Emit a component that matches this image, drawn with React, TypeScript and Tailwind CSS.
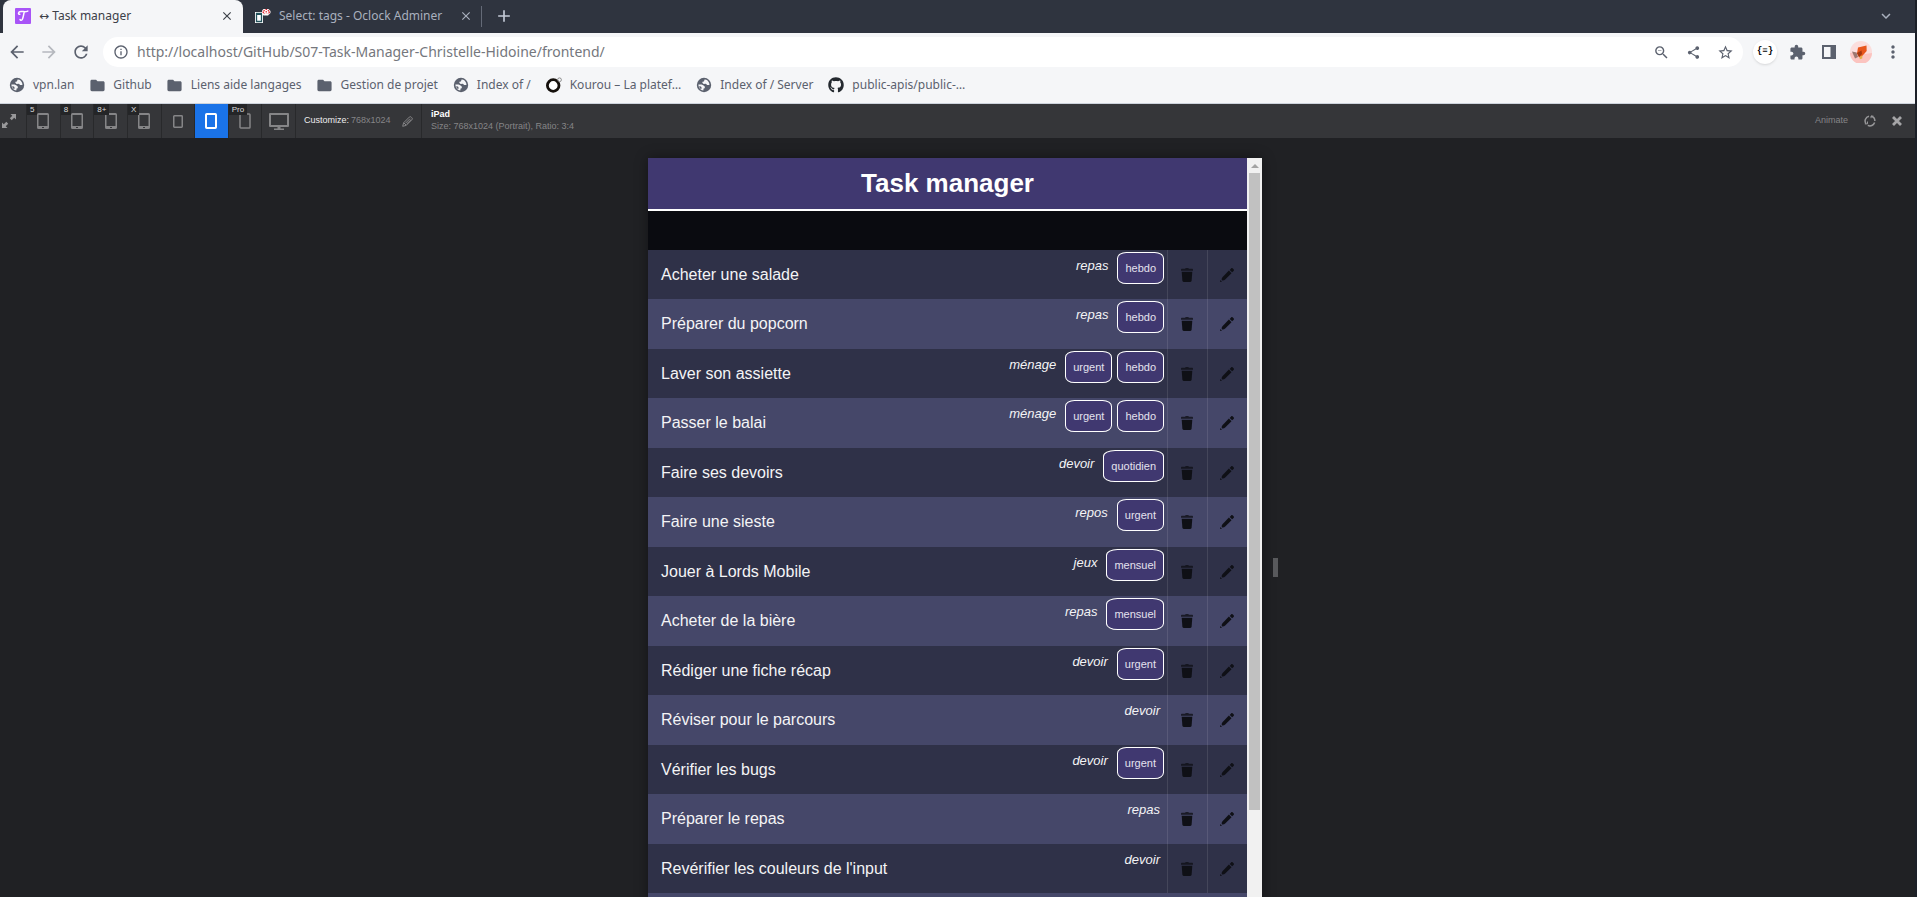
import type { ReactNode } from "react";
import {
  MdAdd,
  MdArrowBack,
  MdArrowForward,
  MdClose,
  MdExpandMore,
  MdExtension,
  MdFolder,
  MdInfoOutline,
  MdMoreVert,
  MdRefresh,
  MdShare,
  MdStarBorder,
  MdZoomOut,
} from "react-icons/md";
import { FaGithub } from "react-icons/fa";

type Task = { name: string; category: string; tags: string[] };

const TASKS: Task[] = [
  { name: "Acheter une salade", category: "repas", tags: ["hebdo"] },
  { name: "Préparer du popcorn", category: "repas", tags: ["hebdo"] },
  { name: "Laver son assiette", category: "ménage", tags: ["urgent", "hebdo"] },
  { name: "Passer le balai", category: "ménage", tags: ["urgent", "hebdo"] },
  { name: "Faire ses devoirs", category: "devoir", tags: ["quotidien"] },
  { name: "Faire une sieste", category: "repos", tags: ["urgent"] },
  { name: "Jouer à Lords Mobile", category: "jeux", tags: ["mensuel"] },
  { name: "Acheter de la bière", category: "repas", tags: ["mensuel"] },
  { name: "Rédiger une fiche récap", category: "devoir", tags: ["urgent"] },
  { name: "Réviser pour le parcours", category: "devoir", tags: [] },
  { name: "Vérifier les bugs", category: "devoir", tags: ["urgent"] },
  { name: "Préparer le repas", category: "repas", tags: [] },
  { name: "Revérifier les couleurs de l'input", category: "devoir", tags: [] },
];

/* ---------- Icons ---------- */

function TaskFavicon() {
  return (
    <svg viewBox="0 0 16 16" className="size-4 shrink-0">
      <rect width="16" height="16" rx="1" fill="#a854f7" />
      <path
        d="M4.800 6.300C3 6.500 2.800 3.600 6 3.500c2.600-.1 4 .7 6.800-.4M9.300 3.900C8.500 6.500 8.400 9 7.400 11.200c-.6 1.300-2 1.400-2.300.3"
        fill="none"
        stroke="#fff"
        strokeWidth="1.500"
        strokeLinecap="round"
      />
    </svg>
  );
}

function AdminerFavicon() {
  return (
    <svg viewBox="0 0 16 16" className="size-4 shrink-0">
      <path d="M0 4h8v11H0z" fill="#fff" />
      <path d="M1.500 5.500h5v8h-5z" fill="#fff" stroke="#24535c" strokeWidth="1.300" />
      <path d="M1 6.500h6" stroke="#24535c" strokeWidth="1" />
      <path d="M8.500 1h5L15.500 3v2L13 7.500H8.500L7 6V2.500z" fill="#fff" />
      <path
        d="M9.500 2 8 4l1.500 2M13 2l1.500 2L13 6M10.500 1.500h2M11.200 3v2.500"
        stroke="#e0202a"
        strokeWidth="1.200"
        fill="none"
        strokeDasharray="1.600 .6"
      />
    </svg>
  );
}

function Globe() {
  return (
    <svg viewBox="0 0 16 16" className="size-4">
      <circle cx="8" cy="8" r="7.200" fill="#5b616e" />
      <path
        d="M8.600 2.600c2-.2 3.300 1.200 4.300 2.900.4.900.6 1.700.5 2.600l-2.300-.2-1.200-1.200-2.300.3-1.300-1.200.2-1.100 1.400-.2z"
        fill="#f5f6f8"
      />
      <path
        d="m2.400 7.400 3.200.1 2 .9 1.300 1.300-.2 1.500-1.100.3-.3 2C4.800 13 2.600 11.200 2.400 7.400z"
        fill="#f5f6f8"
      />
      <path d="m3 9.200 2 .4.700 1.500-.6 1.200C4 11.500 3.300 10.500 3 9.200z" fill="#5b616e" />
    </svg>
  );
}

function Folder() {
  return <MdFolder className="size-[17px] shrink-0" />;
}

function KourouIcon() {
  return (
    <svg viewBox="0 0 16 16" className="size-4">
      <circle cx="7.200" cy="8.500" r="5.800" fill="#fff" stroke="#15100c" strokeWidth="2.800" />
      <circle cx="13.500" cy="2.800" r="1.900" fill="none" stroke="#777" strokeWidth=".8" />
    </svg>
  );
}

function SidePanelIcon() {
  return (
    <svg viewBox="0 0 14 14" className="size-3.5">
      <path d="M0 0h14v14H0zM2 2v10h6.500V2z" fill="#5b616e" fillRule="evenodd" />
    </svg>
  );
}

function Avatar() {
  return (
    <svg viewBox="0 0 22 22" className="size-[22px]">
      <circle cx="11" cy="11" r="11" fill="#fbdedd" />
      <path d="M0 12l7-1 8 2 7-1a11 11 0 0 1-22 0z" fill="#fbc4c0" />
      <path d="m2 10.500 4.500 1L8 16l-3 1.500z" fill="#9c7770" />
      <path d="M8 6.500 16.500 4.500l.2 5.500-4 4.500-3.500 2L7 12.500z" fill="#e8561c" />
      <path d="m7 12 4.500-2.500L12 13l-3 3z" fill="#a33810" />
      <path d="m9.500 16 3-1.800-.3 3.300-2.400.8z" fill="#e5b04a" />
    </svg>
  );
}

function ExpandIcon() {
  return (
    <svg viewBox="0 0 14 14" className="size-3.5" fill="#98989a">
      <path d="M8.500 0H14v5.500L12.200 3.700 9.700 6.200 7.800 4.300l2.500-2.500zM5.500 14H0V8.500l1.800 1.800 2.500-2.500 1.900 1.900-2.500 2.500z" />
    </svg>
  );
}

function PhoneIcon() {
  return (
    <svg viewBox="0 0 12 16" className="h-4 w-3">
      <path
        d="M1.500 0h9A1.500 1.500 0 0 1 12 1.500v13a1.500 1.500 0 0 1-1.500 1.500h-9A1.500 1.500 0 0 1 0 14.500v-13A1.500 1.500 0 0 1 1.500 0zM1.500 2v11h9V2z"
        fill="#858587"
        fillRule="evenodd"
      />
      <path d="M5 14h2v1H5z" fill="#353639" />
    </svg>
  );
}

function SmallTabletIcon() {
  return (
    <svg viewBox="0 0 10 13" className="h-[13px] w-2.5">
      <rect x=".75" y=".75" width="8.500" height="11.500" rx=".7" fill="none" stroke="#858587" strokeWidth="1.500" />
    </svg>
  );
}

function TabletIcon({ active = false }: { active?: boolean }) {
  return (
    <svg viewBox="0 0 12 16" className="h-4 w-3">
      <rect
        x="1"
        y="1"
        width="10"
        height="14"
        rx=".8"
        fill="none"
        stroke={active ? "#fff" : "#858587"}
        strokeWidth={active ? 2 : 1.5}
      />
    </svg>
  );
}

function DesktopIcon() {
  return (
    <svg viewBox="0 0 20 17" className="h-[17px] w-5" fill="#858587">
      <path d="M1 0h18a1 1 0 0 1 1 1v12a1 1 0 0 1-1 1H1a1 1 0 0 1-1-1V1a1 1 0 0 1 1-1zm1 2v10h16V2z" fillRule="evenodd" />
      <path d="M8.500 14h3v1.500H15V17H5v-1.500h3.500z" />
    </svg>
  );
}

function OutlinePencil() {
  return (
    <svg viewBox="0 0 11 11" className="size-[11px]" fill="none" stroke="#858587" strokeWidth="1">
      <path d="M.7 10.300 1.600 6.800 7.300 1.100a1.300 1.300 0 0 1 1.900 0l.7.700a1.300 1.300 0 0 1 0 1.900L4.200 9.400zM1.800 6.800l2.400 2.400M3.500 7.200 8 2.700M4.700 8 9.300 3.500" />
    </svg>
  );
}

function RotateIcon() {
  return (
    <svg viewBox="0 0 12 12" className="size-3" fill="none" stroke="#98989a" strokeWidth="1.500">
      <path d="M5 1.200A4.900 4.900 0 0 0 2 8.800M3.800 10.400a4.900 4.900 0 0 0 6.800-2.900M10.900 6A4.900 4.900 0 0 0 7 1.200" />
      <path d="M.8 8.900h2.700V6.500M7 3.200V1.100h2.400" strokeWidth="1" />
    </svg>
  );
}

function BoldCross() {
  return (
    <svg viewBox="0 0 10 10" className="size-2.5" stroke="#a5a5a7" strokeWidth="2.800">
      <path d="m1 1 8 8M9 1 1 9" />
    </svg>
  );
}

function TrashIcon() {
  return (
    <svg viewBox="0 0 12 14" className="h-3.5 w-3" fill="currentColor">
      <path d="M0 1.600C0 1 .5.800 1 .800h3L4.800 0h2.400L8 .800h3c.5 0 1 .2 1 .8v1.100H0z" opacity=".8" />
      <path d="M.7 3.700h10.600l-.7 9.100c-.1.700-.6 1.200-1.300 1.200H2.700c-.7 0-1.200-.5-1.300-1.200z" />
    </svg>
  );
}

function PencilIcon() {
  return (
    <svg viewBox="0 0 14 14" className="size-3.5" fill="currentColor">
      <path d="m9.700 1.900 1.400-1.500c.5-.5 1.100-.5 1.600 0l.9.900c.5.500.5 1.100 0 1.600l-1.500 1.400z" />
      <path d="m8.900 2.600 2.600 2.600-6.300 6.300c-1 .9-2.200 1.300-3.300.8-.5-1.100-.1-2.300.8-3.300z" />
      <path d="M.3 12 2 13.700.1 14z" />
    </svg>
  );
}

/* ---------- Browser chrome ---------- */

function TabStrip() {
  return (
    <div className="flex h-[33px] items-stretch bg-[#2f343f] pl-[3px] text-[12px]">
      <div className="flex w-60 items-center rounded-t-lg bg-[#f5f6f8] pr-[9px] pb-px pl-3 text-[#3c4048]">
        <TaskFavicon />
        <span className="ml-2 flex-1 truncate">
          <span className="font-['DejaVu_Sans',sans-serif]">↔</span> Task manager
        </span>
        <button type="button" aria-label="Close tab">
          <MdClose className="size-3.5" />
        </button>
      </div>
      <div className="flex w-[238px] items-center pr-2 pb-px pl-3 text-[#a9b0be]">
        <AdminerFavicon />
        <span className="ml-2 flex-1 truncate">Select: tags - Oclock Adminer</span>
        <button type="button" aria-label="Close tab">
          <MdClose className="size-3.5" />
        </button>
      </div>
      <div className="my-1.5 w-px bg-[#646a77]" />
      <button type="button" aria-label="New tab" className="ml-3 pb-px text-[#c3c9d6]">
        <MdAdd className="size-5" />
      </button>
      <button type="button" aria-label="Search tabs" className="mr-5 ml-auto pb-px text-[#a9b0be]">
        <MdExpandMore className="size-[18px]" />
      </button>
    </div>
  );
}

function ToolButton({ label, children }: { label: string; children: ReactNode }) {
  return (
    <button type="button" aria-label={label} className="flex h-[30px] w-8 shrink-0 items-center justify-center">
      {children}
    </button>
  );
}

function AddressRow() {
  return (
    <div className="flex items-center bg-[#f5f6f8] pt-1 pr-1.5 pl-px text-[#5b616e]">
      <ToolButton label="Back">
        <MdArrowBack className="size-5" />
      </ToolButton>
      <div className="text-[#b5b8be]">
        <ToolButton label="Forward">
          <MdArrowForward className="size-5" />
        </ToolButton>
      </div>
      <ToolButton label="Reload">
        <MdRefresh className="size-5" />
      </ToolButton>
      <div className="mx-1.5 flex h-[30px] flex-1 items-center rounded-full bg-white pr-0.5 pl-2.5">
        <MdInfoOutline className="size-4" />
        <input
          aria-label="Address"
          defaultValue="http://localhost/GitHub/S07-Task-Manager-Christelle-Hidoine/frontend/"
          className="ml-2 flex-1 bg-transparent pb-px text-[14px] text-[#75777d] outline-none"
        />
        <ToolButton label="Zoom">
          <MdZoomOut className="size-[17px]" />
        </ToolButton>
        <ToolButton label="Share">
          <MdShare className="size-[15px]" />
        </ToolButton>
        <ToolButton label="Bookmark this page">
          <MdStarBorder className="size-[17px]" />
        </ToolButton>
      </div>
      <ToolButton label="JSON viewer">
        <span className="flex size-6 items-center justify-center rounded-full bg-white font-['Liberation_Mono',monospace] text-[9px] font-bold text-black shadow">
          {"{≡}"}
        </span>
      </ToolButton>
      <ToolButton label="Extensions">
        <MdExtension className="size-[17px]" />
      </ToolButton>
      <ToolButton label="Side panel">
        <SidePanelIcon />
      </ToolButton>
      <ToolButton label="Profile">
        <Avatar />
      </ToolButton>
      <ToolButton label="Menu">
        <MdMoreVert className="size-5" />
      </ToolButton>
    </div>
  );
}

function Bookmark({ icon, children }: { icon: ReactNode; children: ReactNode }) {
  return (
    <a href="#" className="flex items-center gap-2 whitespace-nowrap">
      <span className="flex w-4 justify-center">{icon}</span>
      {children}
    </a>
  );
}

function BookmarkBar() {
  return (
    <nav className="flex h-[37px] items-center gap-[15px] border-b border-[#cdd3dc] bg-[#f5f6f8] pl-[9px] text-[12px] text-[#5b616e]">
      <Bookmark icon={<Globe />}>vpn.lan</Bookmark>
      <Bookmark icon={<Folder />}>Github</Bookmark>
      <Bookmark icon={<Folder />}>Liens aide langages</Bookmark>
      <Bookmark icon={<Folder />}>Gestion de projet</Bookmark>
      <Bookmark icon={<Globe />}>Index of /</Bookmark>
      <Bookmark icon={<KourouIcon />}>Kourou – La platef…</Bookmark>
      <Bookmark icon={<Globe />}>Index of / Server</Bookmark>
      <Bookmark icon={<FaGithub className="size-4 text-[#24292f]" />}>public-apis/public-…</Bookmark>
    </nav>
  );
}

/* ---------- Device toolbar ---------- */

function DeviceButton({
  label,
  badge,
  active = false,
  children,
}: {
  label: string;
  badge?: string;
  active?: boolean;
  children: ReactNode;
}) {
  return (
    <button
      type="button"
      aria-label={label}
      aria-pressed={active}
      className={`relative flex items-center justify-center border-l border-[#28292b] ${active ? "bg-[#1a73e8]" : ""}`}
    >
      {children}
      {badge && (
        <span className="absolute top-0 left-0 bg-[#242527] px-[3px] text-[8px] leading-[11px] text-[#dcdcdc]">
          {badge}
        </span>
      )}
    </button>
  );
}

function DeviceToolbar() {
  return (
    <div className="flex h-[34px] items-stretch bg-[#353639] font-['Liberation_Sans',sans-serif] text-[9px] text-[#858587]">
      <button type="button" aria-label="Fit to window" className="flex w-[26px] items-center pl-0.5">
        <ExpandIcon />
      </button>
      <div className="grid w-[269px] grid-cols-8">
        <DeviceButton label="iPhone 5" badge="5">
          <PhoneIcon />
        </DeviceButton>
        <DeviceButton label="iPhone 8" badge="8">
          <PhoneIcon />
        </DeviceButton>
        <DeviceButton label="iPhone 8 Plus" badge="8+">
          <PhoneIcon />
        </DeviceButton>
        <DeviceButton label="iPhone X" badge="X">
          <PhoneIcon />
        </DeviceButton>
        <DeviceButton label="iPad Mini">
          <SmallTabletIcon />
        </DeviceButton>
        <DeviceButton label="iPad" active>
          <TabletIcon active />
        </DeviceButton>
        <DeviceButton label="iPad Pro" badge="Pro">
          <TabletIcon />
        </DeviceButton>
        <DeviceButton label="Desktop">
          <DesktopIcon />
        </DeviceButton>
      </div>
      <button type="button" className="flex w-[127px] items-center border-x border-[#28292b] px-2">
        <span className="text-[#eeeeee]">Customize:</span>
        <span className="ml-0.5 flex-1 text-left">768x1024</span>
        <OutlinePencil />
      </button>
      <div className="flex flex-col justify-center gap-px pb-0.5 pl-[9px] leading-[11px]">
        <strong className="text-white">iPad</strong>
        <span>Size: 768x1024 (Portrait), Ratio: 3:4</span>
      </div>
      <div className="ml-auto flex items-center gap-4 pr-[13px]">
        <button type="button">Animate</button>
        <button type="button" aria-label="Rotate">
          <RotateIcon />
        </button>
        <button type="button" aria-label="Close">
          <BoldCross />
        </button>
      </div>
    </div>
  );
}

/* ---------- Task manager page ---------- */

function TaskRow({ task }: { task: Task }) {
  return (
    <li className="flex odd:h-[49px] odd:bg-[#2f3148] even:h-[50px] even:bg-[#454769]">
      <p className="flex flex-1 items-center pl-[13px] text-base">{task.name}</p>
      <div className="flex items-start pt-0.5 pr-[3px]">
        <em className="mt-1 mr-1 text-[13px] leading-5">{task.category}</em>
        {task.tags.map((tag) => (
          <span
            key={tag}
            className="ml-[5px] flex h-8 items-center rounded-[20%] border border-white bg-[#403870] px-[7px] text-[11px] text-[#e4e2ee]"
          >
            {tag}
          </span>
        ))}
      </div>
      <button
        type="button"
        aria-label={`Supprimer ${task.name}`}
        className="flex w-10 items-center justify-center border-l border-white/10 pr-0.5 text-[#0f1016]"
      >
        <TrashIcon />
      </button>
      <button
        type="button"
        aria-label={`Modifier ${task.name}`}
        className="flex w-10 items-center justify-center border-l border-white/10 pr-0.5 text-[#0f1016]"
      >
        <PencilIcon />
      </button>
    </li>
  );
}

function TaskManagerPage() {
  return (
    <div className="flex-1 bg-[#454769] font-['Liberation_Sans',sans-serif] text-[#f4f4f6]">
      <header className="flex h-[53px] items-center justify-center border-b-2 border-white bg-[#403870]">
        <h1 className="text-[26px] font-bold text-white">Task manager</h1>
      </header>
      <div className="h-[39px] bg-[#0a0b10]" />
      <ul>
        {TASKS.map((task) => (
          <TaskRow key={task.name} task={task} />
        ))}
      </ul>
    </div>
  );
}

function Scrollbar() {
  return (
    <div className="flex w-[15px] flex-col items-center bg-[#f1f1f1]">
      <div className="flex h-[15px] items-center">
        <svg viewBox="0 0 8 4" className="h-1 w-2" fill="#a3a3a3">
          <path d="M4 0 8 4H0z" />
        </svg>
      </div>
      <div className="h-[637px] w-[11px] bg-[#c1c1c1]" />
    </div>
  );
}

export default function App() {
  return (
    <div className="h-screen overflow-hidden bg-[#1c2028] pr-0.5 font-['Noto_Sans',sans-serif]">
      <div className="flex h-full flex-col">
        <TabStrip />
        <AddressRow />
        <BookmarkBar />
        <DeviceToolbar />
        <main className="flex min-h-0 flex-1 items-start justify-center overflow-hidden bg-[#202124] pt-5 pl-[11px]">
          <div className="flex h-[819px] w-[614px] shadow-[0_0_12px_rgba(0,0,0,0.4)]">
            <TaskManagerPage />
            <Scrollbar />
          </div>
          <div className="flex h-[819px] items-center pl-[11px]">
            <div className="h-[19px] w-[5px] bg-[#58595c]" />
          </div>
        </main>
      </div>
    </div>
  );
}
